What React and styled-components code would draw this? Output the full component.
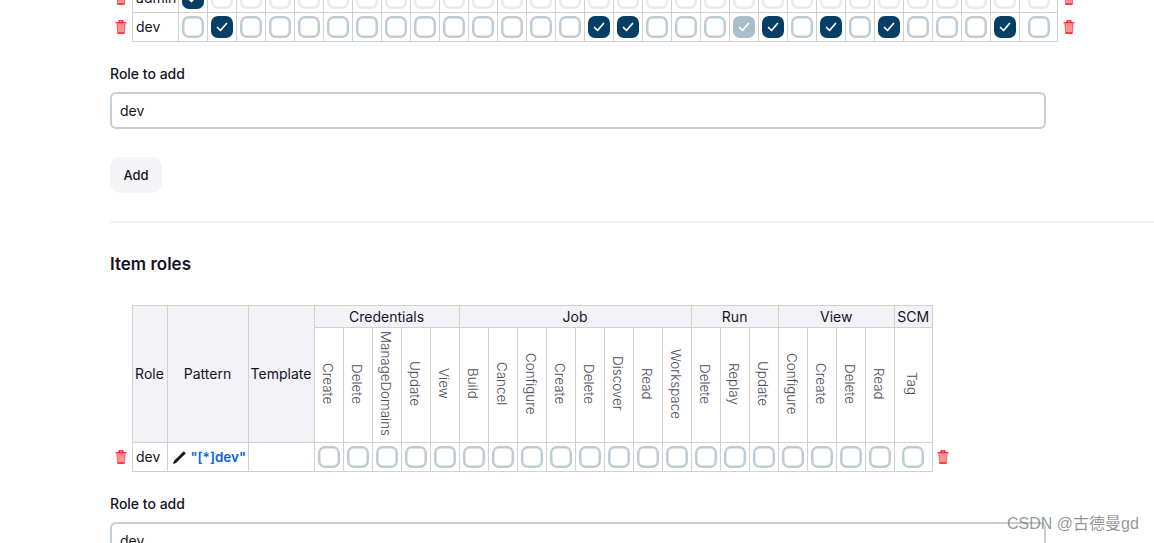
import React from "react";
import styled, { createGlobalStyle } from "styled-components";

const Global = createGlobalStyle`
  html, body { margin: 0; padding: 0; height: 543px; overflow: hidden; background: #fff; }
  body { font-family: Inter, "Noto Sans", sans-serif; font-size: 14px; color: #14141f; }
`;

const Page = styled.main`
  position: relative;
  height: 543px;
  overflow: hidden;
`;
const Content = styled.div`
  margin-top: -17px;
  padding-left: 110px;
  display: flex;
  flex-direction: column;
`;
const Table = styled.table`
  border-collapse: collapse;
  table-layout: fixed;
  width: ${(p) => p.$width}px;
`;
const Cell = styled.td`
  border: 1px solid #d2d2cb;
  padding: 0;
  height: 28px;
  text-align: ${(p) => (p.$center ? "center" : "left")};
  vertical-align: middle;
  font-size: 14px;
  line-height: 18px;
  white-space: nowrap;
`;
const NameCell = styled(Cell)`
  padding-left: 3.5px;
`;
const IconCell = styled.td`
  border: none;
  padding: 0;
  text-align: center;
  vertical-align: middle;
  line-height: 0;
`;
const GroupHead = styled.th`
  border: 1px solid #d2d2cb;
  background: #f2f2f7;
  padding: 1px 0 0;
  height: 20px;
  font-size: 14px;
  font-weight: 400;
  line-height: 18px;
  text-align: center;
`;
const SideHead = styled(GroupHead)`
  padding: 0;
  white-space: nowrap;
`;
const PermHead = styled.th`
  border: 1px solid #d2d2cb;
  padding: 0;
  height: 114px;
  font-weight: 300;
  text-align: center;
  vertical-align: middle;
  background: #fff;
`;
const Rotated = styled.span`
  display: inline-block;
  writing-mode: vertical-rl;
  font-size: 13.4px;
  line-height: 18px;
  font-weight: 300;
  color: #50505a;
  white-space: nowrap;
  padding-right: 2px;
`;
const Box = styled.span`
  box-sizing: border-box;
  width: 22px;
  height: 22px;
  margin: 0 auto;
  border-radius: 7px;
  border: 2px solid ${(p) => (p.$checked ? "transparent" : p.$faint ? "#e6ebee" : "#bfcbd3")};
  background: ${(p) => (p.$checked ? (p.$muted ? "#a9bdcb" : "#053f66") : "#fff")};
  background-clip: border-box;
  box-shadow: ${(p) => (p.$checked ? "none" : `inset 0 0 0 0.5px ${p.$faint ? "#e6ebee" : "#bfcbd3"}`)};
  display: flex;
  align-items: center;
  justify-content: center;
`;
const Label = styled.label`
  display: block;
  font-size: 14px;
  font-weight: 500;
  line-height: 18px;
  margin-top: ${(p) => p.$top}px;
`;
const Input = styled.input`
  display: block;
  box-sizing: border-box;
  width: 936px;
  height: 37px;
  margin-top: 9px;
  padding: 0 8px;
  border: 2px solid #c3ced6;
  border-radius: 6px;
  background: #fff;
  font: 400 14px Inter, sans-serif;
  color: #14141f;
  outline: none;
`;
const AddButton = styled.button`
  width: 52px;
  height: 36px;
  margin-top: 28px;
  padding: 0;
  border: none;
  border-radius: 10px;
  background: #f5f5f8;
  font: 500 13px Inter, sans-serif;
  color: #14141f;
`;
const Divider = styled.hr`
  margin: 28px 0 0;
  border: none;
  border-top: 2px solid #f3f3f3;
  height: 0;
`;
const Heading = styled.h2`
  margin: 31px 0 0;
  font-size: 17px;
  line-height: 20px;
  font-weight: 600;
`;
const SecondWrap = styled.div`
  margin-top: 31px;
`;
const PatternRow = styled.span`
  display: flex;
  align-items: center;
  gap: 4px;
  padding-left: 4px;
`;
const PatternLink = styled.a`
  color: #0b63e5;
  font-weight: 600;
  font-size: 13.5px;
`;
const Watermark = styled.div`
  position: absolute;
  left: 1007px;
  top: 515px;
  font-family: "Liberation Sans", "Noto Sans CJK SC", sans-serif;
  font-size: 16px;
  line-height: 18px;
  color: rgba(110, 110, 110, 0.72);
  white-space: nowrap;
`;

const Trash = () => (
  <svg width="12" height="14" viewBox="0 0 13 15" preserveAspectRatio="none" aria-hidden="true">
    <path d="M2 3.5h9l-.9 10.5H2.9z" fill="#ff8383" />
    <path d="M4.2 5v8M6.5 5v8M8.8 5v8" stroke="#ffb0b0" strokeWidth="0.7" />
    <path d="M.5 3h12M4.5 3V1h4v2M2.6 14h7.8" stroke="#f5000b" strokeWidth="1.2" fill="none" />
    <path d="M2 3.5l.9 10.5M11 3.5l-.9 10.5" stroke="#f5303a" strokeWidth="0.7" fill="none" />
  </svg>
);
const Pencil = () => (
  <svg width="15" height="15" viewBox="0 0 15 15" aria-hidden="true">
    <path d="M11.8 1.2l2 2L4 13l-3 1 .9-3z" fill="#14141f" />
  </svg>
);
const Check = () => (
  <svg width="12" height="10" viewBox="0 0 12 10" aria-hidden="true">
    <path d="M1.5 5.5l3 3 6-7" stroke="#fff" strokeWidth="1.7" fill="none" strokeLinecap="round" strokeLinejoin="round" />
  </svg>
);

const CheckBox = ({ checked, muted, faint }) => (
  <Box $checked={checked} $muted={muted} $faint={faint}>
    {checked && <Check />}
  </Box>
);

const TOTAL = 30;
const devChecked = [1, 14, 15, 20, 22, 24, 28];

const groups = [
  { name: "Credentials", perms: ["Create", "Delete", "ManageDomains", "Update", "View"] },
  { name: "Job", perms: ["Build", "Cancel", "Configure", "Create", "Delete", "Discover", "Read", "Workspace"] },
  { name: "Run", perms: ["Delete", "Replay", "Update"] },
  { name: "View", perms: ["Configure", "Create", "Delete", "Read"] },
  { name: "SCM", perms: ["Tag"] },
];
const allPerms = groups.flatMap((g) => g.perms);

const GlobalRoles = () => (
  <Table $width={970}>
    <colgroup>
      <col width="22" />
      <col width="46" />
      {Array.from({ length: TOTAL - 1 }, (_, i) => <col key={i} width="29" />)}
      <col width="38" />
      <col width="22" />
    </colgroup>
    <tbody>
      <tr>
        <IconCell><Trash /></IconCell>
        <NameCell>admin</NameCell>
        {Array.from({ length: TOTAL }, (_, i) => (
          <Cell key={i} $center><CheckBox checked={i === 0} faint={i !== 0} /></Cell>
        ))}
        <IconCell><Trash /></IconCell>
      </tr>
      <tr>
        <IconCell><Trash /></IconCell>
        <NameCell>dev</NameCell>
        {Array.from({ length: TOTAL }, (_, i) => (
          <Cell key={i} $center>
            <CheckBox checked={devChecked.includes(i) || i === 19} muted={i === 19} />
          </Cell>
        ))}
        <IconCell><Trash /></IconCell>
      </tr>
    </tbody>
  </Table>
);

const ItemRoles = () => (
  <Table $width={844}>
    <colgroup>
      <col width="22" />
      <col width="35" />
      <col width="81" />
      <col width="66" />
      {Array.from({ length: allPerms.length - 1 }, (_, i) => <col key={i} width="29" />)}
      <col width="38" />
      <col width="22" />
    </colgroup>
    <thead>
      <tr>
        <IconCell rowSpan={2} />
        <SideHead rowSpan={2}>Role</SideHead>
        <SideHead rowSpan={2}>Pattern</SideHead>
        <SideHead rowSpan={2}>Template</SideHead>
        {groups.map((g) => (
          <GroupHead key={g.name} colSpan={g.perms.length}>{g.name}</GroupHead>
        ))}
        <IconCell rowSpan={2} />
      </tr>
      <tr>
        {allPerms.map((p, i) => (
          <PermHead key={i}><Rotated>{p}</Rotated></PermHead>
        ))}
      </tr>
    </thead>
    <tbody>
      <tr>
        <IconCell><Trash /></IconCell>
        <NameCell>dev</NameCell>
        <Cell>
          <PatternRow>
            <Pencil />
            <PatternLink>"[*]dev"</PatternLink>
          </PatternRow>
        </Cell>
        <Cell />
        {allPerms.map((_, i) => (
          <Cell key={i} $center><CheckBox /></Cell>
        ))}
        <IconCell><Trash /></IconCell>
      </tr>
    </tbody>
  </Table>
);

export default function App() {
  return (
    <Page>
      <Global />
      <Content>
        <GlobalRoles />
        <Label $top={23}>Role to add</Label>
        <Input defaultValue="dev" readOnly />
        <div><AddButton>Add</AddButton></div>
        <Divider />
        <Heading>Item roles</Heading>
        <SecondWrap><ItemRoles /></SecondWrap>
        <Label $top={23}>Role to add</Label>
        <Input defaultValue="dev" readOnly />
      </Content>
      <Watermark>CSDN @古德曼gd</Watermark>
    </Page>
  );
}
